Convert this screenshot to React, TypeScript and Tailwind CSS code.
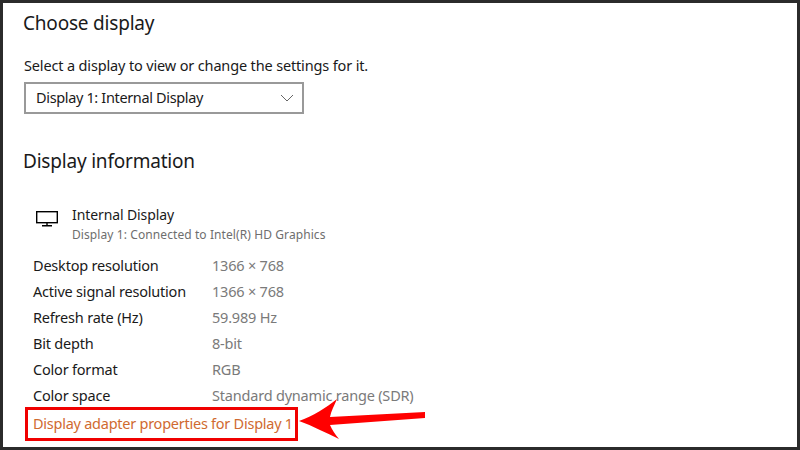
const rows = [
  ['Desktop resolution', '1366 × 768'],
  ['Active signal resolution', '1366 × 768'],
  ['Refresh rate (Hz)', '59.989 Hz'],
  ['Bit depth', '8-bit'],
  ['Color format', 'RGB'],
  ['Color space', 'Standard dynamic range (SDR)'],
];

function Monitor() {
  return (
    <svg width="24" height="18" viewBox="0 0 24 18" fill="none" stroke="#000" strokeWidth="1.4">
      <rect x="1.7" y="1.7" width="20.6" height="11" />
      <path d="M12 13v3M7 15.8h10" />
    </svg>
  );
}

function Arrow() {
  return (
    <svg className="absolute left-[293px] top-[393px]" width="134" height="46" viewBox="0 0 134 46">
      <path
        d="M3 25 C 17 20, 30 12, 41 3 C 38 10, 35 15, 34 21 L 129 16 L 129 22 L 34 29 C 36 34, 39 38, 43 43 C 30 37, 17 30, 3 25 Z"
        fill="#ff0000"
      />
    </svg>
  );
}

export default function App() {
  return (
    <div className="relative h-[450px] w-[800px] overflow-hidden border-[3px] border-[#2b2b2b] bg-white pl-[20px] font-['Noto_Sans',sans-serif] text-[#1a1a1a]">
      <h2 className="mt-[6px] text-[19px] leading-[28px] tracking-[-0.2px]">Choose display</h2>

      <p className="mt-[17px] ml-[1px] text-[14.5px] leading-[22px] tracking-[-0.15px]">Select a display to view or change the settings for it.</p>

      <div className="mt-[6px] ml-[1px] flex h-[32px] w-[280px] items-center justify-between border-2 border-[#999999] pl-[10px] pr-[8px] text-[14.5px] tracking-[-0.35px]">
        <span>Display 1: Internal Display</span>
        <svg width="14" height="8" viewBox="0 0 14 8" fill="none" stroke="#666" strokeWidth="1">
          <path d="M1 1l6 6 6-6" />
        </svg>
      </div>

      <h2 className="mt-[33px] text-[19px] leading-[28px] tracking-[-0.2px]">Display information</h2>

      <div className="mt-[30px] flex items-start pl-[12px]">
        <div className="mt-[5px] w-[37px]">
          <Monitor />
        </div>
        <div>
          <div className="text-[14px] leading-[20px] tracking-[-0.1px]">Internal Display</div>
          <div className="text-[12px] leading-[20px] tracking-[0.09px] text-[#6e6e6e]">Display 1: Connected to Intel(R) HD Graphics</div>
        </div>
      </div>

      <div className="mt-[8px] pl-[10px]">
        {rows.map(([label, value]) => (
          <div key={label} className="flex h-[26px] items-center text-[14.5px] tracking-[-0.2px]">
            <span className="w-[179px]">{label}</span>
            <span className="text-[#7a7a7a]">{value}</span>
          </div>
        ))}
      </div>

      <div className="-mt-[2px] ml-[2px] flex h-[34px] w-[273px] items-center whitespace-nowrap border-[3px] border-[#f00000] pl-[5px] text-[14.5px] tracking-[-0.25px] text-[#d06a30]">
        Display adapter properties for Display 1
      </div>

      <Arrow />
    </div>
  );
}
